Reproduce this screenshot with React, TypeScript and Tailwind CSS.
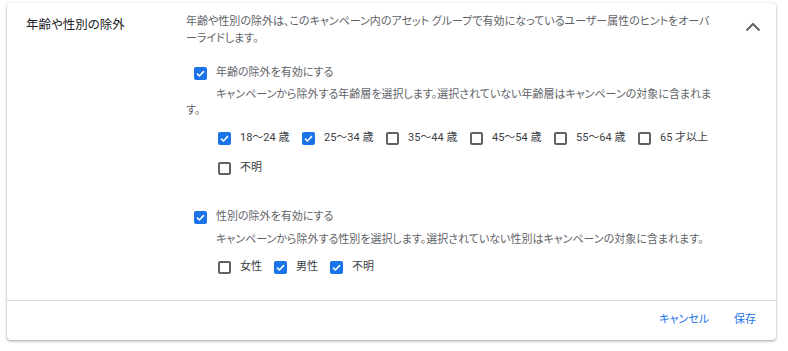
import React from "react";

const font = "font-['Roboto','Noto_Sans_CJK_JP',sans-serif] [font-feature-settings:'palt']";

function Checkbox({ checked }: { checked: boolean }) {
  if (checked) {
    return (
      <span className="flex h-[13px] w-[13px] shrink-0 items-center justify-center rounded-[2px] bg-[#1a73e8]">
        <svg viewBox="0 0 12 12" className="h-[11px] w-[11px]">
          <path d="M2.2 6.2 L4.8 8.7 L9.8 3.4" fill="none" stroke="#fff" strokeWidth="1.7" />
        </svg>
      </span>
    );
  }
  return <span className="h-[13px] w-[13px] shrink-0 rounded-[2px] border-2 border-[#5f6368] bg-white" />;
}

function Option({ label, checked, className = "" }: { label: string; checked: boolean; className?: string }) {
  return (
    <label className={`flex h-[20px] items-center gap-[9px] ${className}`}>
      <Checkbox checked={checked} />
      <span className="text-[11px] text-[#3c4043]">{label}</span>
    </label>
  );
}

const ages = [
  { label: "18〜24 歳", checked: true },
  { label: "25〜34 歳", checked: true },
  { label: "35〜44 歳", checked: false },
  { label: "45〜54 歳", checked: false },
  { label: "55〜64 歳", checked: false },
  { label: "65 才以上", checked: false },
  { label: "不明", checked: false },
];

const genders = [
  { label: "女性", checked: false },
  { label: "男性", checked: true },
  { label: "不明", checked: true },
];

export default function App() {
  return (
    <div className={`min-h-[351px] bg-white pl-[7px] pt-[3px] ${font}`}>
      <div className="flex w-[769px] flex-col rounded-[4px] bg-white shadow-[0_1px_2px_rgba(60,64,67,0.3),0_1px_3px_1px_rgba(60,64,67,0.15)]">
        <div className="flex pt-[10px] pb-[23px]">
          <div className="w-[179px] shrink-0 pl-[19px] pt-[3px] text-[12.5px] leading-[17px] text-[#202124]">
            年齢や性別の除外
          </div>
          <div className="w-[536px] shrink-0">
            <p className="pr-[10px] text-[11px] leading-[17px] text-[#5f6368]">
              年齢や性別の除外は、このキャンペーン内のアセット グループで有効になっているユーザー属性のヒントをオーバーライドします。
            </p>

            <div className="mt-[16px] flex h-[20px] items-center gap-[9px] pl-[8px]">
              <Checkbox checked />
              <span className="text-[11px] text-[#5f6368]">年齢の除外を有効にする</span>
            </div>
            <p className="mt-[4px] pr-[10px] indent-[30px] text-[11px] leading-[16px] text-[#5f6368]">
              キャンペーンから除外する年齢層を選択します。選択されていない年齢層はキャンペーンの対象に含まれます。
            </p>
            <div className="mt-[9px] flex flex-wrap gap-y-[10px] pl-[32px]">
              {ages.map((a) => (
                <Option key={a.label} label={a.label} checked={a.checked} className="w-[84px]" />
              ))}
            </div>

            <div className="mt-[29px] flex h-[20px] items-center gap-[9px] pl-[8px]">
              <Checkbox checked />
              <span className="text-[11px] text-[#5f6368]">性別の除外を有効にする</span>
            </div>
            <p className="mt-[5px] pl-[30px] text-[11px] leading-[16px] text-[#5f6368]">
              キャンペーンから除外する性別を選択します。選択されていない性別はキャンペーンの対象に含まれます。
            </p>
            <div className="mt-[9px] flex gap-[12px] pl-[32px]">
              {genders.map((g) => (
                <Option key={g.label} label={g.label} checked={g.checked} />
              ))}
            </div>
          </div>
          <div className="flex flex-1 justify-center pt-[9px]">
            <svg viewBox="0 0 16 10" className="ml-[8px] h-[10px] w-[16px]">
              <path d="M1.5 8.5 L8 2 L14.5 8.5" fill="none" stroke="#5f6368" strokeWidth="2" />
            </svg>
          </div>
        </div>
        <div className="flex h-[40px] items-center justify-end gap-[25px] border-t border-[#dadce0] pr-[20px] text-[11px] text-[#1a73e8]">
          <button className="cursor-pointer">キャンセル</button>
          <button className="cursor-pointer">保存</button>
        </div>
      </div>
    </div>
  );
}
